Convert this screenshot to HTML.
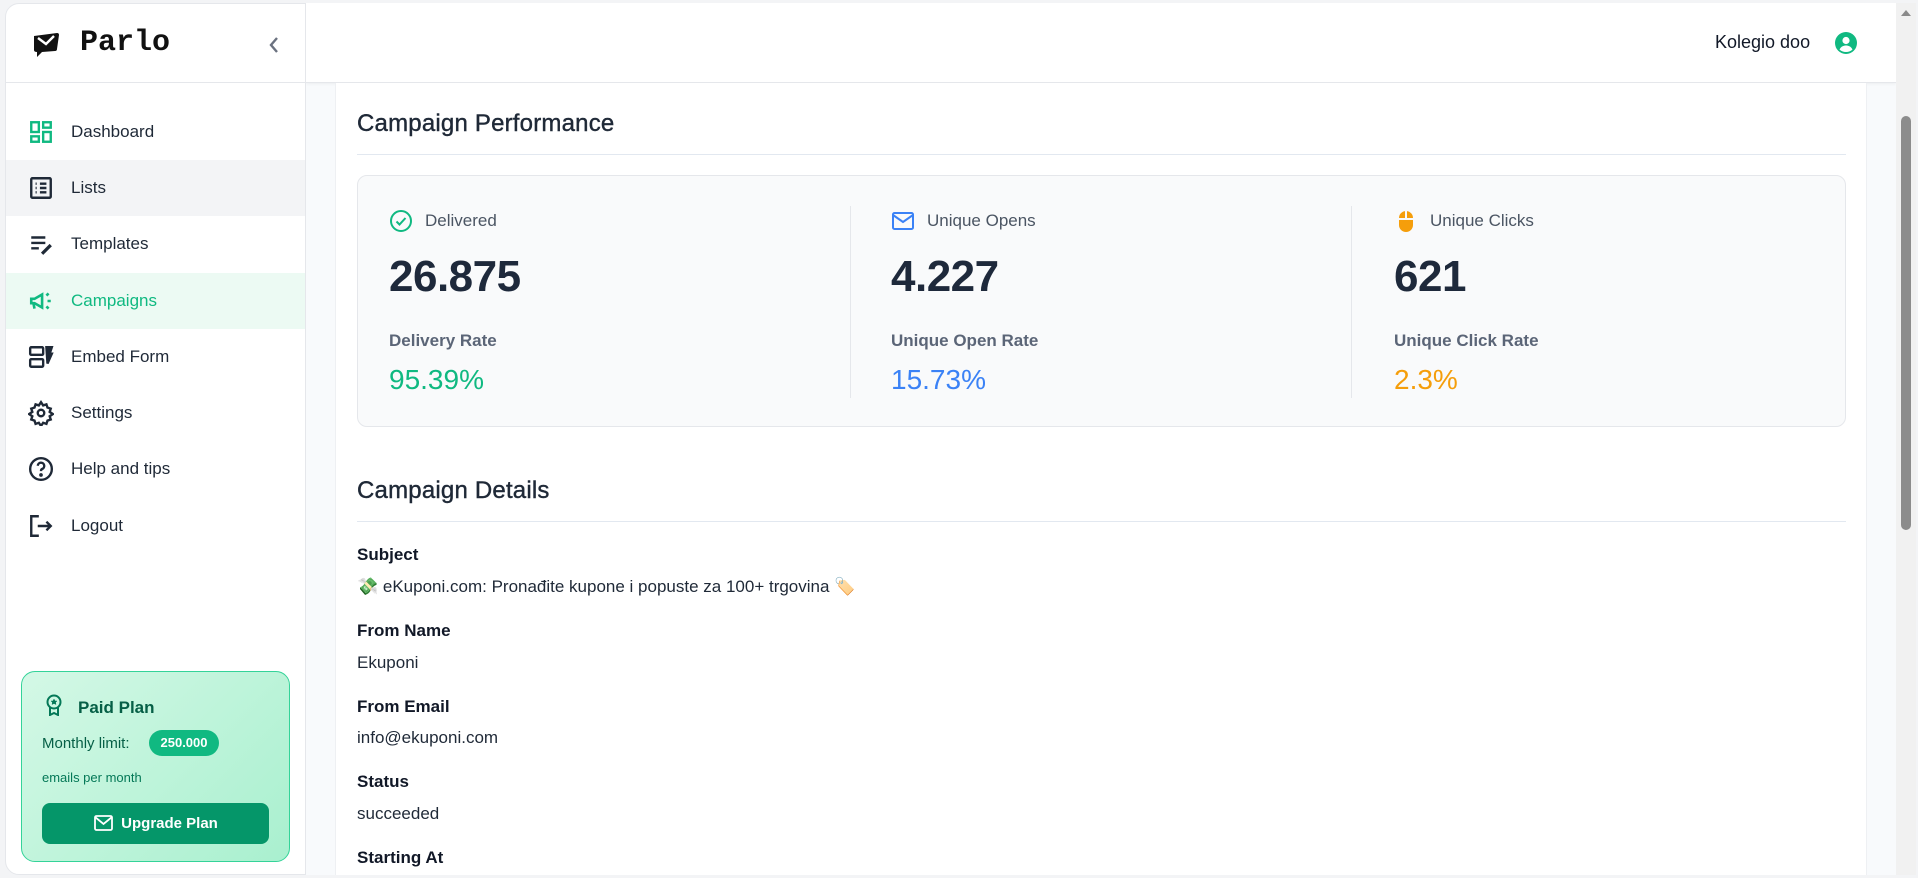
<!DOCTYPE html>
<html><head><meta charset="utf-8">
<style>
*{box-sizing:border-box;margin:0;padding:0}
html,body{width:1918px;height:878px;overflow:hidden;background:#f3f4f6;font-family:"Liberation Sans",sans-serif;color:#1f2937}
.side{position:absolute;left:5px;top:3px;width:301px;height:872px;background:#fff;border:1px solid #e5e7eb;border-radius:14px 0 0 14px;overflow:hidden}
.logo{height:79px;border-bottom:1px solid #e5e7eb;position:relative}
.logo .t{position:absolute;left:74px;top:22px;font-family:"Liberation Mono",monospace;font-weight:bold;font-size:30px;color:#111}
.nav{position:absolute;left:0;width:300px;height:56px;display:flex;align-items:center}
.nav svg{position:absolute;left:22px;width:26px;height:26px}
.nav span{position:absolute;left:65px;font-size:17px;color:#1f2937}
.main{position:absolute;left:306px;top:3px;width:1590px;height:872px;background:#f8fafc;overflow:hidden}
.hdr{position:absolute;left:0;top:0;width:1590px;height:80px;background:#fff;border-bottom:1px solid #e5e7eb;box-shadow:0 1px 3px rgba(0,0,0,.05)}
.card{position:absolute;left:29px;top:80px;width:1532px;height:800px;background:#fff;border-left:1px solid #eef0f3;border-right:1px solid #eef0f3}
h2{position:absolute;font-size:24px;font-weight:normal;color:#1f2937;letter-spacing:.2px;-webkit-text-stroke:.4px #1f2937}
.hr{position:absolute;left:21px;width:1489px;height:1px;background:#e2e8f0}
.stats{position:absolute;left:21px;top:92px;width:1489px;height:252px;background:#f9fafb;border:1px solid #e5e7eb;border-radius:10px}
.col{position:absolute;top:0;height:250px}
.lab{position:absolute;top:35px;left:36px;font-size:17px;color:#4b5563;white-space:nowrap}
.ico{position:absolute;top:33px;left:0;width:24px;height:24px}
.num{position:absolute;top:76px;left:0;font-size:44px;font-weight:bold;color:#1e293b;letter-spacing:-.5px}
.rl{position:absolute;top:155px;left:0;font-size:17px;font-weight:bold;color:#5b6577;white-space:nowrap}
.pc{position:absolute;top:188px;left:0;font-size:28px}
.div{position:absolute;top:30px;width:1px;height:192px;background:#e5e7eb}
.dl{position:absolute;left:21px;font-size:17px;font-weight:bold;color:#111827}
.dv{position:absolute;left:21px;font-size:17px;color:#1f2937}
.plan{position:absolute;left:15px;top:667px;width:269px;height:191px;border:1px solid #34d399;border-radius:14px;background:linear-gradient(135deg,#d4f8e6,#a9f0cf)}
</style></head><body>
<div class="side">
 <div class="logo">
  <svg style="position:absolute;left:26px;top:28px" width="28" height="26" viewBox="0 0 28 26"><path d="M2 4 L25 1 Q27 1 27 3 L25 17 Q25 19 23 19 L10 20 L5 25 L5 20 Q2 20 2 18 Z" fill="#111"/><path d="M6 6 L14 12 L22 4" stroke="#fff" stroke-width="2.4" fill="none"/></svg>
  <div class="t">Parlo</div>
  <svg style="position:absolute;left:262px;top:32px" width="12" height="18" viewBox="0 0 12 18"><path d="M9 2 L3 9 L9 16" stroke="#6b7280" stroke-width="2.4" fill="none"/></svg>
 </div>
 <div class="nav" style="top:100px"><svg viewBox="0 0 24 24" fill="none" stroke="#10b981" stroke-width="2.2"><rect x="3" y="3" width="7" height="9"/><rect x="14" y="3" width="7" height="5"/><rect x="14" y="12" width="7" height="9"/><rect x="3" y="16" width="7" height="5"/></svg><span>Dashboard</span></div>
 <div class="nav" style="top:156px;background:#f3f4f6"><svg viewBox="0 0 24 24" fill="none" stroke="#1f2937" stroke-width="2.2"><rect x="3" y="3" width="18" height="18" rx="1"/><path d="M7 8h1M7 12h1M7 16h1M11 8h6M11 12h6M11 16h6"/></svg><span>Lists</span></div>
 <div class="nav" style="top:212px"><svg viewBox="0 0 24 24" fill="none" stroke="#1f2937" stroke-width="2.2"><path d="M3 6h13M3 11h13M3 16h7"/><path d="M13 21 L21 13" stroke-width="3"/></svg><span>Templates</span></div>
 <div class="nav" style="top:269px;background:#ecfaf3"><svg viewBox="0 0 24 24" fill="none" stroke="#10b981" stroke-width="2.4"><path d="M3 10 v4 h3 l7 4 V6 l-7 4 Z M5 14 l1 5"/><path d="M17 7 l2-2 M18 12 h3 M17 17 l2 2"/></svg><span style="color:#10b981">Campaigns</span></div>
 <div class="nav" style="top:325px"><svg viewBox="0 0 24 24" fill="none" stroke="#1f2937" stroke-width="2.2"><rect x="2" y="3" width="12" height="7" rx="1"/><rect x="2" y="14" width="12" height="7" rx="1"/><path d="M17 3h5l-2 6h2l-4 9z" fill="#1f2937"/></svg><span>Embed Form</span></div>
 <div class="nav" style="top:381px"><svg viewBox="0 0 24 24" fill="none" stroke="#1f2937" stroke-width="2.2"><circle cx="12" cy="12" r="3"/><path d="M12 2 l2 3 3-1 1 3 3 1-1 3 3 2-3 2 1 3-3 1-1 3-3-1-2 3-2-3-3 1-1-3-3-1 1-3-3-2 3-2-1-3 3-1 1-3 3 1z"/></svg><span>Settings</span></div>
 <div class="nav" style="top:437px"><svg viewBox="0 0 24 24" fill="none" stroke="#1f2937" stroke-width="2.2"><circle cx="12" cy="12" r="10"/><path d="M9 9a3 3 0 1 1 4 3c-1 .5-1 1-1 2"/><circle cx="12" cy="17.5" r=".6" fill="#1f2937"/></svg><span>Help and tips</span></div>
 <div class="nav" style="top:494px"><svg viewBox="0 0 24 24" fill="none" stroke="#1f2937" stroke-width="2.2"><path d="M10 3H3v18h7M9 12h12M17 8l4 4-4 4"/></svg><span>Logout</span></div>
 <div class="plan">
  <svg style="position:absolute;left:23px;top:22px" width="18" height="22" viewBox="0 0 18 22" fill="none" stroke="#047857" stroke-width="2"><circle cx="9" cy="8" r="6.5"/><path d="M5 13v8l4-2 4 2v-8"/><path d="M9 5l1 2h2l-1.5 1.5.5 2-2-1-2 1 .5-2L6 7h2z" fill="#047857" stroke-width=".5"/></svg>
  <div style="position:absolute;left:56px;top:26px;font-size:17px;font-weight:bold;color:#065f46">Paid Plan</div>
  <div style="position:absolute;left:20px;top:63px;font-size:15px;color:#065f46">Monthly limit:</div>
  <div style="position:absolute;left:127px;top:58px;width:70px;height:26px;border-radius:13px;background:#10b981;color:#fff;font-size:13px;font-weight:bold;text-align:center;line-height:26px">250.000</div>
  <div style="position:absolute;left:20px;top:98px;font-size:13px;color:#047857">emails per month</div>
  <div style="position:absolute;left:20px;top:131px;width:227px;height:41px;border-radius:8px;background:#059669;color:#fff;font-size:15px;font-weight:bold;line-height:41px;text-align:center;padding-left:28px">Upgrade Plan
   <svg style="position:absolute;left:52px;top:12px" width="19" height="16" viewBox="0 0 19 16" fill="none" stroke="#fff" stroke-width="1.8"><rect x="1" y="1" width="17" height="14" rx="1.5"/><path d="M1 2l8.5 7L18 2"/></svg></div>
 </div>
</div>
<div class="main">
 <div class="hdr">
  <div style="position:absolute;left:1409px;top:29px;font-size:18px;color:#111827">Kolegio doo</div>
  <svg style="position:absolute;left:1529px;top:29px" width="22" height="22" viewBox="0 0 22 22"><circle cx="11" cy="11" r="11" fill="#10b981"/><circle cx="11" cy="8.5" r="3.6" fill="#fff"/><path d="M4.5 17.5c1.5-3 4-4 6.5-4s5 1 6.5 4c-1.7 1.6-4 2.5-6.5 2.5s-4.8-.9-6.5-2.5z" fill="#fff"/></svg>
 </div>
 <div class="card">
  <h2 style="left:21px;top:27px">Campaign Performance</h2>
  <div class="hr" style="top:71px"></div>
  <div class="stats">
   <div class="col" style="left:31px">
    <svg class="ico" viewBox="0 0 24 24" fill="none" stroke="#10b981" stroke-width="2"><circle cx="12" cy="12" r="10"/><path d="M7.5 12.5l3 3 6-6.5"/></svg>
    <div class="lab">Delivered</div><div class="num">26.875</div><div class="rl">Delivery Rate</div><div class="pc" style="color:#10b981">95.39%</div>
   </div>
   <div class="div" style="left:492px"></div>
   <div class="col" style="left:533px">
    <svg class="ico" viewBox="0 0 24 24" fill="none" stroke="#3b82f6" stroke-width="2"><rect x="2" y="4" width="20" height="16" rx="1.5"/><path d="M2 6l10 7 10-7"/></svg>
    <div class="lab">Unique Opens</div><div class="num">4.227</div><div class="rl">Unique Open Rate</div><div class="pc" style="color:#3b82f6">15.73%</div>
   </div>
   <div class="div" style="left:993px"></div>
   <div class="col" style="left:1036px">
    <svg class="ico" viewBox="0 0 24 24"><path d="M5 9a7 7 0 0 1 6-6.9V9z M13 2.1A7 7 0 0 1 19 9h-6z M5 11h14v5a7 7 0 0 1-14 0z" fill="#f59e0b"/></svg>
    <div class="lab">Unique Clicks</div><div class="num">621</div><div class="rl">Unique Click Rate</div><div class="pc" style="color:#f59e0b">2.3%</div>
   </div>
  </div>
  <h2 style="left:21px;top:394px">Campaign Details</h2>
  <div class="hr" style="top:438px"></div>
  <div class="dl" style="top:462px">Subject</div>
  <div class="dv" style="top:494px">💸 eKuponi.com: Pronađite kupone i popuste za 100+ trgovina 🏷️</div>
  <div class="dl" style="top:538px">From Name</div>
  <div class="dv" style="top:570px">Ekuponi</div>
  <div class="dl" style="top:614px">From Email</div>
  <div class="dv" style="top:645px">info@ekuponi.com</div>
  <div class="dl" style="top:689px">Status</div>
  <div class="dv" style="top:721px">succeeded</div>
  <div class="dl" style="top:765px">Starting At</div>
 </div>
</div>
<div style="position:absolute;left:1896px;top:3px;width:20px;height:872px;background:#f1f1f1"></div>
<div style="position:absolute;left:1901px;top:10px;width:0;height:0;border-left:5px solid transparent;border-right:5px solid transparent;border-bottom:6px solid #8a8a8a"></div>
<div style="position:absolute;left:1901px;top:116px;width:10px;height:414px;border-radius:5px;background:#8c8c8c"></div>
</body></html>
